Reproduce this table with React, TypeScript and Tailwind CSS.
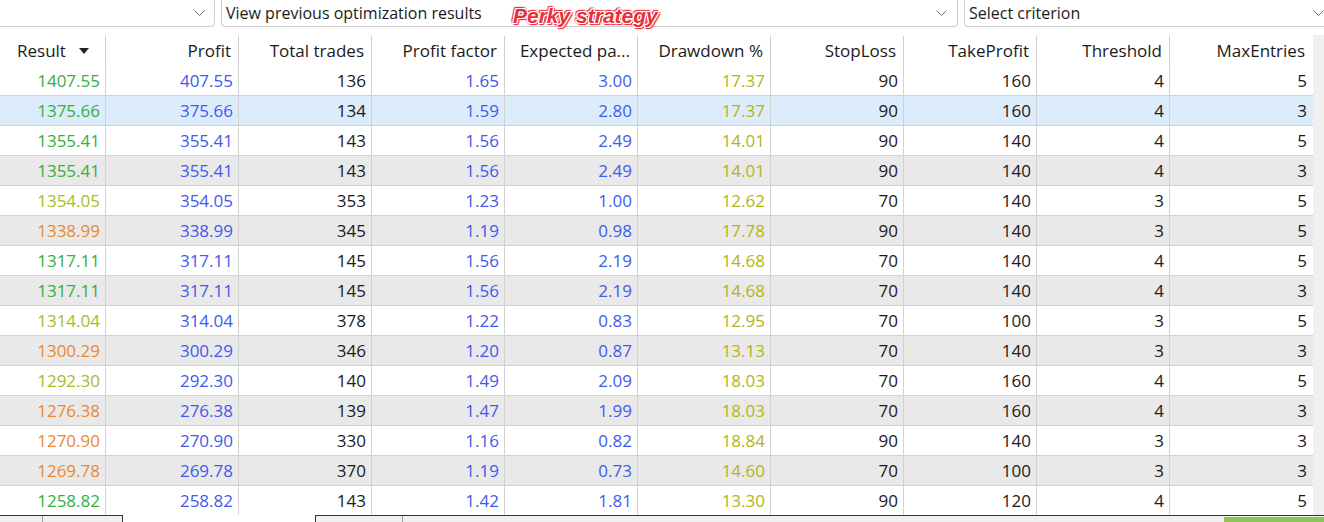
import React from 'react'

type Tone = 'g' | 'y' | 'o'

const rows: [string, string, string, string, string, string, string, string, string, string, Tone][] = [
    ['1407.55', '407.55', '136', '1.65', '3.00', '17.37', '90', '160', '4', '5', 'g'],
    ['1375.66', '375.66', '134', '1.59', '2.80', '17.37', '90', '160', '4', '3', 'g'],
    ['1355.41', '355.41', '143', '1.56', '2.49', '14.01', '90', '140', '4', '5', 'g'],
    ['1355.41', '355.41', '143', '1.56', '2.49', '14.01', '90', '140', '4', '3', 'g'],
    ['1354.05', '354.05', '353', '1.23', '1.00', '12.62', '70', '140', '3', '5', 'y'],
    ['1338.99', '338.99', '345', '1.19', '0.98', '17.78', '90', '140', '3', '5', 'o'],
    ['1317.11', '317.11', '145', '1.56', '2.19', '14.68', '70', '140', '4', '5', 'g'],
    ['1317.11', '317.11', '145', '1.56', '2.19', '14.68', '70', '140', '4', '3', 'g'],
    ['1314.04', '314.04', '378', '1.22', '0.83', '12.95', '70', '100', '3', '5', 'y'],
    ['1300.29', '300.29', '346', '1.20', '0.87', '13.13', '70', '140', '3', '3', 'o'],
    ['1292.30', '292.30', '140', '1.49', '2.09', '18.03', '70', '160', '4', '5', 'y'],
    ['1276.38', '276.38', '139', '1.47', '1.99', '18.03', '70', '160', '4', '3', 'o'],
    ['1270.90', '270.90', '330', '1.16', '0.82', '18.84', '90', '140', '3', '3', 'o'],
    ['1269.78', '269.78', '370', '1.19', '0.73', '14.60', '70', '100', '3', '3', 'o'],
    ['1258.82', '258.82', '143', '1.42', '1.81', '13.30', '90', '120', '4', '5', 'g'],
]

const toneClass: Record<Tone, string> = {
    g: 'text-[#36b03a]',
    y: 'text-[#a2c01e]',
    o: 'text-[#e8892e]',
}

const headers = ['Profit', 'Total trades', 'Profit factor', 'Expected pa...', 'Drawdown %', 'StopLoss', 'TakeProfit', 'Threshold']

const Chevron = () => (
    <svg width="11" height="7" viewBox="0 0 11 7" className="shrink-0">
        <polyline points="0.5,0.5 5.5,5.5 10.5,0.5" fill="none" stroke="#6b6b6b" strokeWidth="1" />
    </svg>
)

const App = () => {
    return (
        <div className="w-[1324px] h-[522px] overflow-hidden bg-white relative font-['Open_Sans',sans-serif] text-[17px] text-[#1a1a1a]">
            {/* top selectors */}
            <div className="flex h-[27px] gap-[6px] overflow-hidden text-[16px]">
                <div className="w-[215px] shrink-0 flex items-center justify-end pr-[9px] border-r border-b border-[#cfcfcf] rounded-br-[4px]">
                    <Chevron />
                </div>
                <div className="w-[737px] shrink-0 flex items-center justify-between pl-[4px] pr-[10px] border-x border-b border-[#cfcfcf] rounded-b-[4px]">
                    <span className="leading-none">View previous optimization results</span>
                    <Chevron />
                </div>
                <div className="w-[371px] shrink-0 flex items-center justify-between pl-[4px] pr-[10px] border-x border-b border-[#cfcfcf] rounded-b-[4px]">
                    <span className="leading-none">Select criterion</span>
                    <Chevron />
                </div>
            </div>

            <div className="absolute left-[513px] top-[3px] font-['Liberation_Sans',sans-serif] font-bold italic text-[21px] leading-[26px] text-[#e8303a] [text-shadow:1px_0_0_#fff,-1px_0_0_#fff,0_1px_0_#fff,0_-1px_0_#fff,1px_1px_0_#fff,-1px_-1px_0_#fff,1px_-1px_0_#fff,-1px_1px_0_#fff,2px_0_1px_#e8303a,-2px_0_1px_#e8303a,0_2px_1px_#e8303a,0_-2px_1px_#e8303a,2px_2px_1px_#e8303a,-2px_-2px_1px_#e8303a]">
                Perky strategy
            </div>

            {/* table */}
            <div className="mt-[8px] flex">
                <div className="w-[1313px]">
                    <div className="grid grid-cols-[106px_repeat(8,133px)_143px] h-[31px] pt-[1px]">
                        <div className="flex items-center pl-[17px] border-r border-[#cfcfcf]">
                            <span className="w-[62px]">Result</span>
                            <svg width="10" height="6" viewBox="0 0 10 6">
                                <polygon points="0,0 10,0 5,6" fill="#222" />
                            </svg>
                        </div>
                        {headers.map((h) => (
                            <div key={h} className="flex items-center justify-end pr-[7px] border-r border-[#cfcfcf] whitespace-nowrap">
                                {h}
                            </div>
                        ))}
                        <div className="flex items-center justify-end pr-[8px] whitespace-nowrap">MaxEntries</div>
                    </div>
                    {rows.map((r, i) => {
                        const bg = i === 1 ? 'bg-[#ddecfa]' : i % 2 === 1 ? 'bg-[#e9e9e9]' : 'bg-white'
                        const last = i === rows.length - 1
                        return (
                            <div
                                key={i}
                                className={`grid grid-cols-[106px_repeat(8,133px)_143px] ${last ? 'h-[29px]' : 'h-[30px] border-b border-[#d2d2d2]'} ${bg}`}
                            >
                                {r.slice(0, 10).map((v, j) => {
                                    const color =
                                        j === 0
                                            ? toneClass[r[10]]
                                            : j === 1 || j === 3 || j === 4
                                              ? 'text-[#3d5af1]'
                                              : j === 5
                                                ? 'text-[#b3b514]'
                                                : 'text-[#1a1a1a]'
                                    return (
                                        <div
                                            key={j}
                                            className={`flex items-center justify-end pr-[5px] ${j < 9 ? 'border-r border-[#d2d2d2]' : 'pr-[6px]'} ${color}`}
                                        >
                                            {v}
                                        </div>
                                    )
                                })}
                            </div>
                        )
                    })}
                </div>
                <div className="flex-1 bg-[#f0f0f0]" />
            </div>

            {/* bottom strip */}
            <div className="flex h-[7px]">
                <div className="w-[123px] flex border-t border-r border-[#333] bg-[#f0f0f0]">
                    <div className="w-[43px] border-r border-[#9a9a9a]" />
                </div>
                <div className="w-[192px]" />
                <div className="flex-1 flex border-t border-l border-[#333] bg-[#f0f0f0]">
                    <div className="w-[87px] border-r border-[#9a9a9a]" />
                    <div className="flex-1" />
                    <div className="w-[100px] mt-[1px] bg-[#8dc653]" />
                </div>
            </div>
        </div>
    )
}

export default App
